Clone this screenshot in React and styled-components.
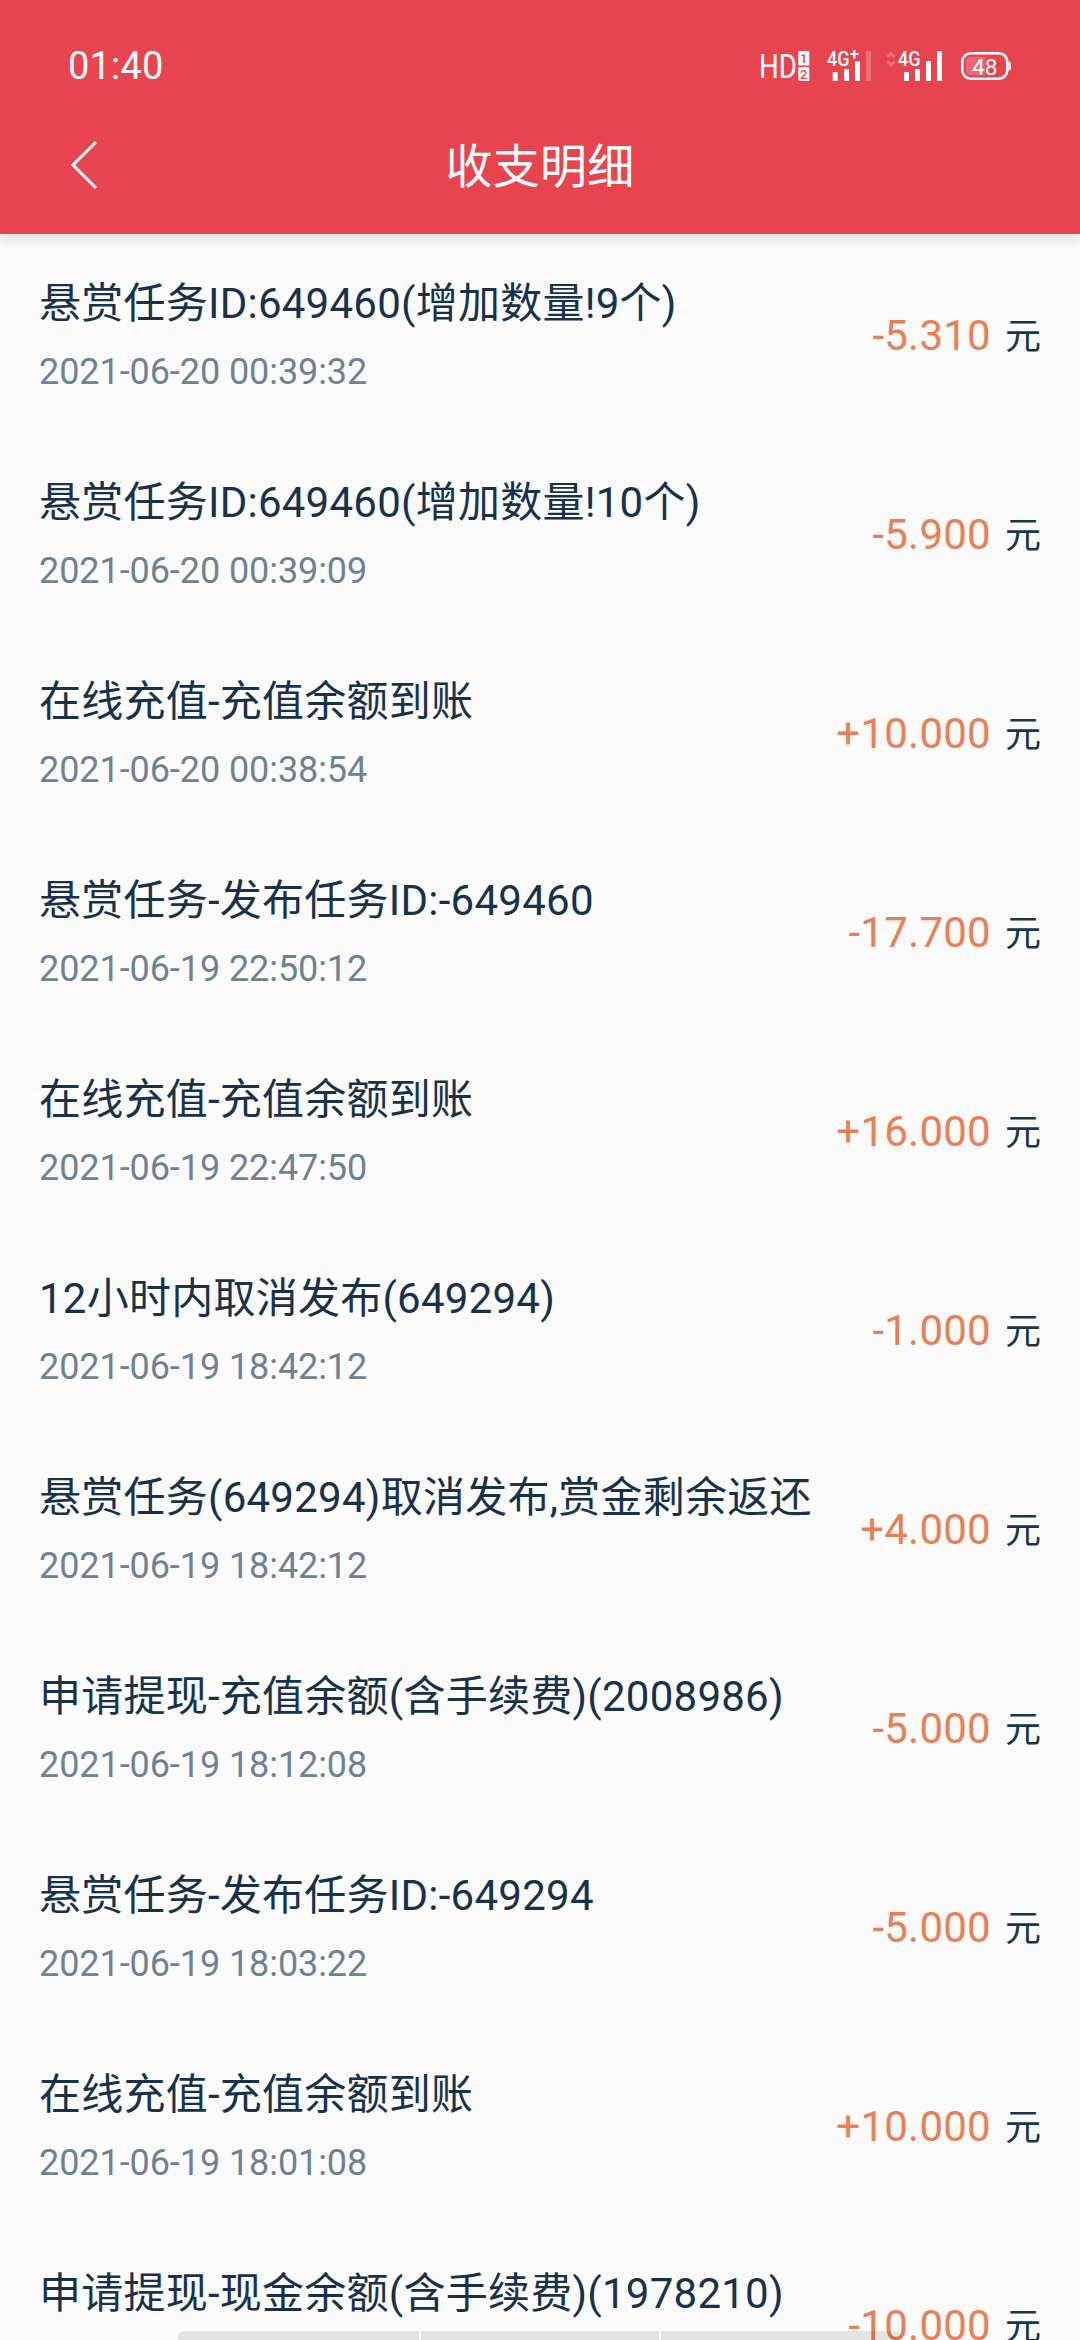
import React from "react";
import styled, { createGlobalStyle } from "styled-components";

const GlobalStyle = createGlobalStyle`
  html, body { margin: 0; padding: 0; background: #fafafa; }
  *, *::before, *::after { box-sizing: border-box; }
`;

const Screen = styled.div`
  position: relative;
  display: flex;
  flex-direction: column;
  width: 1080px;
  height: 2340px;
  overflow: hidden;
  background: #fafafa;
  font-family: Roboto, "Noto Sans CJK SC", sans-serif;
`;

const Header = styled.header`
  flex: none;
  height: 234px;
  background: #e8444f;
  color: #fff;
  box-shadow: 0 2px 14px rgba(0, 0, 0, 0.17);
  z-index: 1;
`;

const StatusBar = styled.div`
  display: flex;
  justify-content: space-between;
  height: 96px;
  padding: 36px 68px 0 68px;
`;

const Clock = styled.span`
  font-size: 38px;
  line-height: 60px;
  letter-spacing: 0.2px;
`;

const StatusIcons = styled.svg`
  display: block;
  width: 260px;
  height: 40px;
  margin-top: 10px;
  font-family: Roboto, sans-serif;
`;

const TitleBar = styled.div`
  display: grid;
  grid-template-columns: 168px 1fr 168px;
  align-items: center;
  height: 138px;
`;

const BackIcon = styled.svg`
  width: 30px;
  height: 52px;
  margin-left: 69px;
`;

const Title = styled.h1`
  margin: 3px 0 0;
  text-align: center;
  font-size: 47px;
  line-height: 70px;
  font-weight: 400;
  letter-spacing: 0.2px;
`;

const List = styled.main`
  display: flex;
  flex-direction: column;
  padding-top: 1px;
`;

const Row = styled.section`
  flex: none;
  display: flex;
  align-items: center;
  justify-content: space-between;
  height: 199px;
  padding: 0 39px;
`;

const Details = styled.div`
  display: flex;
  flex-direction: column;
  gap: 9px;
  padding-top: 3px;
`;

const Name = styled.div`
  font-size: 42px;
  line-height: 63px;
  letter-spacing: 0.25px;
  white-space: nowrap;
  color: #17324a;
`;

const Time = styled.div`
  font-size: 36px;
  line-height: 56px;
  letter-spacing: -0.07px;
  white-space: nowrap;
  color: #6f8293;
`;

const Amount = styled.div`
  display: flex;
  align-items: flex-start;
  gap: 14px;
  padding-top: 5px;
  white-space: nowrap;
`;

const Value = styled.span`
  font-size: 42px;
  line-height: 57px;
  letter-spacing: 0.25px;
  color: #ea7e54;
`;

const Unit = styled.span`
  font-size: 36px;
  line-height: 60px;
  color: #17384a;
`;

const GestureHint = styled.div`
  position: absolute;
  left: 178px;
  bottom: 0;
  display: grid;
  grid-template-columns: 241px 1fr 241px;
  gap: 2px;
  width: 724px;
  height: 9px;
  overflow: hidden;
  border-radius: 6px 6px 0 0;
`;

const HintPart = styled.span`
  background: rgba(0, 0, 0, 0.085);
`;

const records = [
  ["悬赏任务ID:649460(增加数量!9个)", "2021-06-20 00:39:32", "-5.310"],
  ["悬赏任务ID:649460(增加数量!10个)", "2021-06-20 00:39:09", "-5.900"],
  ["在线充值-充值余额到账", "2021-06-20 00:38:54", "+10.000"],
  ["悬赏任务-发布任务ID:-649460", "2021-06-19 22:50:12", "-17.700"],
  ["在线充值-充值余额到账", "2021-06-19 22:47:50", "+16.000"],
  ["12小时内取消发布(649294)", "2021-06-19 18:42:12", "-1.000"],
  ["悬赏任务(649294)取消发布,赏金剩余返还", "2021-06-19 18:42:12", "+4.000"],
  ["申请提现-充值余额(含手续费)(2008986)", "2021-06-19 18:12:08", "-5.000"],
  ["悬赏任务-发布任务ID:-649294", "2021-06-19 18:03:22", "-5.000"],
  ["在线充值-充值余额到账", "2021-06-19 18:01:08", "+10.000"],
  ["申请提现-现金余额(含手续费)(1978210)", "", "-10.000"],
];

function Indicators() {
  return (
    <StatusIcons viewBox="752 46 260 40" fill="#fff">
      <text x="759" y="78" fontSize="34" textLength="38" lengthAdjust="spacingAndGlyphs">HD</text>
      <rect x="798.300" y="51" width="11" height="14.500" rx="1" />
      <rect x="798.300" y="67" width="11" height="14" rx="1" />
      <text x="800" y="63" fontSize="13" fontWeight="500" fill="#e8444f">1</text>
      <text x="800" y="79" fontSize="13" fontWeight="500" fill="#e8444f">2</text>

      <text x="827" y="66" fontSize="20.500" fontWeight="500" textLength="22.500" lengthAdjust="spacingAndGlyphs">4G</text>
      <path d="M850 54h8.500M854.250 50v8.500" stroke="#fff" strokeWidth="2.200" />
      <rect x="832.700" y="72" width="5" height="9" rx="1" />
      <rect x="844" y="69" width="5" height="12" rx="1" />
      <rect x="855" y="61" width="5" height="20" rx="1" />
      <rect x="866" y="51" width="5" height="30" rx="1" opacity="0.23" />

      <path d="M887.500 57l3.500-3.500 3.500 3.500M887.500 61.500l3.500 3.500 3.500-3.500" fill="none" stroke="#fff" strokeWidth="2.800" opacity="0.25" />
      <text x="898" y="66" fontSize="20.500" fontWeight="500" textLength="22.500" lengthAdjust="spacingAndGlyphs">4G</text>
      <rect x="904" y="72" width="5" height="9" rx="1" />
      <rect x="915" y="69" width="5" height="12" rx="1" />
      <rect x="926" y="61" width="5" height="20" rx="1" />
      <rect x="937" y="51" width="5" height="30" rx="1" />

      <rect x="962.300" y="53.300" width="45" height="25.400" rx="8.500" fill="none" stroke="#fff" strokeWidth="2.600" />
      <path d="M1008.500 61.500q2.500 0 2.500 2.500v4q0 2.500-2.500 2.500z" />
      <path d="M970 57h15v18h-15q-4 0-4-4v-10q0-4 4-4z" opacity="0.2" />
      <text x="972" y="74.500" fontSize="22.500" textLength="25.500" lengthAdjust="spacingAndGlyphs">48</text>
    </StatusIcons>
  );
}

export default function App() {
  return (
    <Screen>
      <GlobalStyle />
      <Header>
        <StatusBar>
          <Clock>01:40</Clock>
          <Indicators />
        </StatusBar>
        <TitleBar>
          <BackIcon viewBox="0 0 30 52" fill="none" stroke="#fff" strokeWidth="3">
            <path d="M27 3L4 26L27 49" />
          </BackIcon>
          <Title>收支明细</Title>
        </TitleBar>
      </Header>
      <List>
        {records.map(([name, time, value], index) => (
          <Row key={index}>
            <Details>
              <Name>{name}</Name>
              <Time>{time || "\u00a0"}</Time>
            </Details>
            <Amount>
              <Value>{value}</Value>
              <Unit>元</Unit>
            </Amount>
          </Row>
        ))}
      </List>
      <GestureHint>
        <HintPart />
        <HintPart />
        <HintPart />
      </GestureHint>
    </Screen>
  );
}
